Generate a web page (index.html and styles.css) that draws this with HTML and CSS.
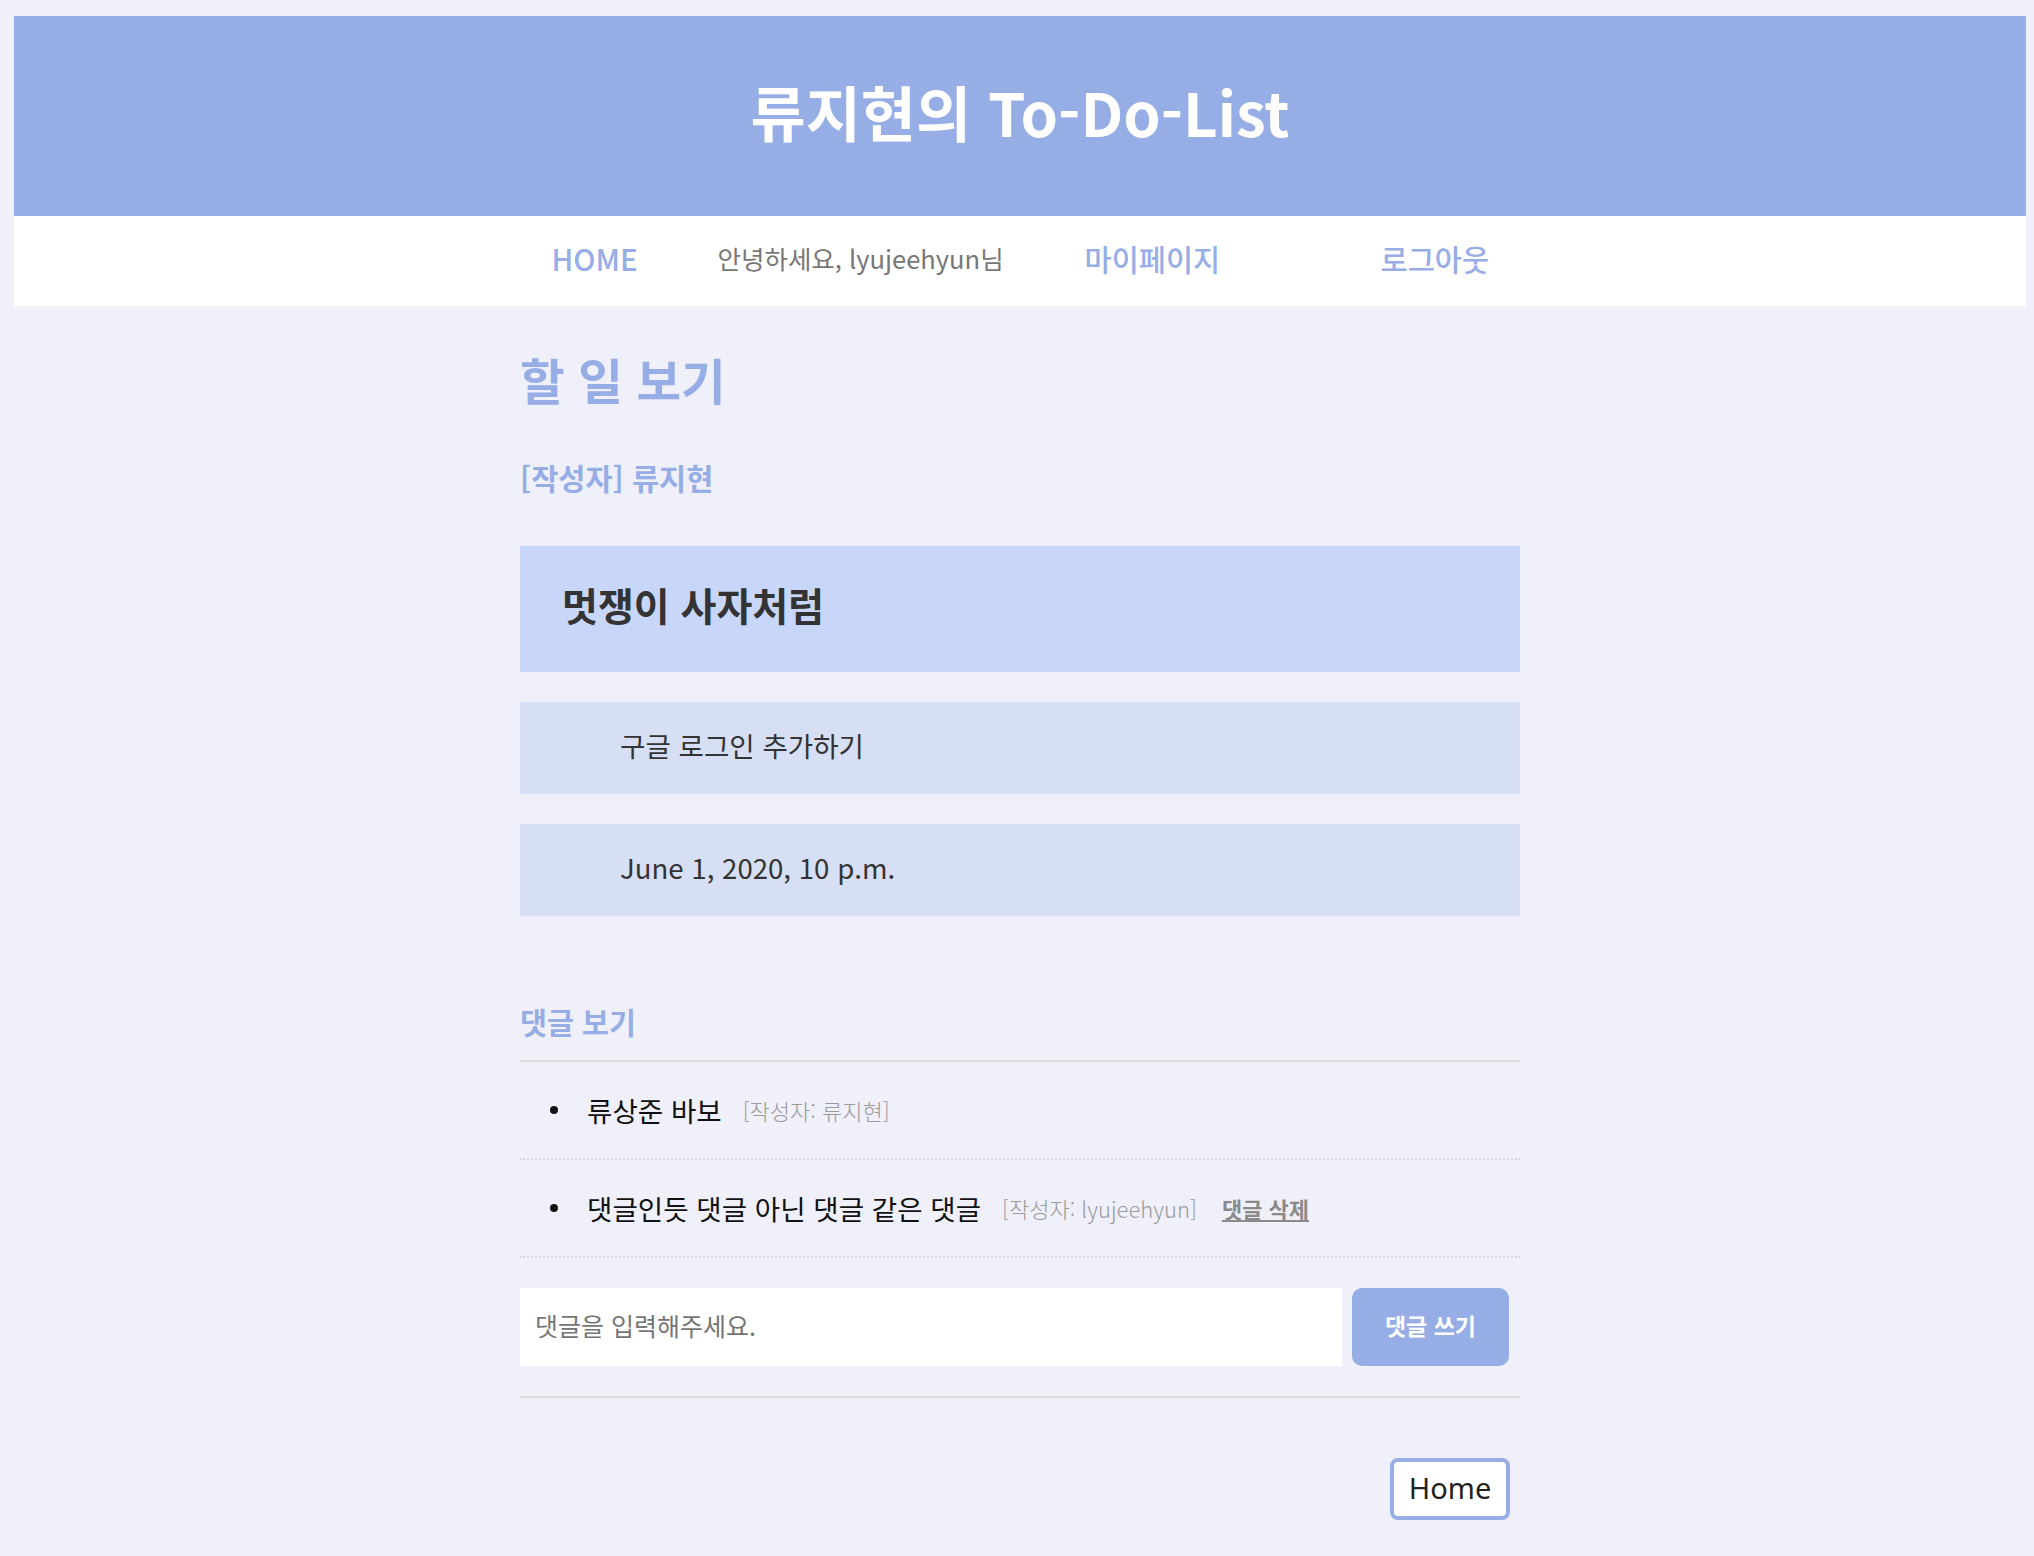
FILE: index.html
```html
<!DOCTYPE html>
<html lang="ko">
<head>
<meta charset="utf-8">
<title>류지현의 To-Do-List</title>
<link rel="stylesheet" href="styles.css">
</head>
<body>
<header class="site-header">
  <h1 class="site-title">류지현의 To-Do-List</h1>
</header>
<nav class="site-nav">
  <a class="nav-item nav-link w1" href="#">HOME</a>
  <span class="nav-item nav-greet w2">안녕하세요, lyujeehyun님</span>
  <a class="nav-item nav-link w3" href="#">마이페이지</a>
  <a class="nav-item nav-link w4" href="#">로그아웃</a>
</nav>
<main class="content">
  <h2 class="page-title">할 일 보기</h2>
  <h3 class="author">[작성자] 류지현</h3>
  <div class="todo-title">멋쟁이 사자처럼</div>
  <div class="todo-field">구글 로그인 추가하기</div>
  <div class="todo-field">June 1, 2020, 10 p.m.</div>

  <h3 class="comments-title">댓글 보기</h3>
  <div class="rule"></div>
  <ul class="comment-list">
    <li class="comment"><span class="bullet"></span><span class="comment-text">류상준 바보</span><span class="comment-meta">[작성자: 류지현]</span></li>
    <li class="comment"><span class="bullet"></span><span class="comment-text">댓글인듯 댓글 아닌 댓글 같은 댓글</span><span class="comment-meta">[작성자: lyujeehyun]</span><a class="comment-delete" href="#">댓글 삭제</a></li>
  </ul>
  <form class="comment-form">
    <input class="comment-input" type="text" placeholder="댓글을 입력해주세요.">
    <button class="comment-submit" type="button">댓글 쓰기</button>
  </form>
  <div class="rule rule-bottom"></div>
  <div class="home-row">
    <button class="home-btn" type="button">Home</button>
  </div>
</main>
</body>
</html>
```
FILE: styles.css
```css
html, body {
  background: #eff0f9;
}
body {
  margin: 16px 8px 0 14px;
  font-family: "Noto Sans CJK KR", "Noto Sans", sans-serif;
  color: #333;
}
.site-header {
  height: 200px;
  background: #96ade6;
  display: flex;
  align-items: center;
  justify-content: center;
}
.site-title {
  margin: 0;
  padding-bottom: 11px;
  font-size: 60px;
  line-height: 60px;
  font-weight: 700;
  color: #ffffff;
}
.site-nav {
  height: 90px;
  background: #ffffff;
  display: flex;
  align-items: center;
  justify-content: center;
  line-height: 28px;
  padding-bottom: 6px;
  box-sizing: border-box;
}
.nav-item {
  display: block;
  white-space: nowrap;
  text-decoration: none;
}
.w1 { width: 166px; }
.w2 { width: 367px; }
.w3 { width: 296px; }
.w4 { width: 108px; }
.nav-link {
  color: #96ade6;
  font-size: 29.5px;
  font-weight: 500;
}
.nav-greet {
  color: #777777;
  font-size: 25.5px;
}
.content {
  width: 1000px;
  margin: 0 auto;
}
.page-title {
  margin: 49px 0 0;
  font-size: 48.5px;
  line-height: 48px;
  font-weight: 700;
  color: #96ade6;
}
.author {
  margin: 60px 0 0;
  font-size: 29.5px;
  line-height: 28px;
  font-weight: 700;
  color: #96ade6;
}
.todo-title {
  margin-top: 55px;
  height: 126px;
  box-sizing: border-box;
  padding: 0 0 10px 42px;
  display: flex;
  align-items: center;
  background: #c8d6fa;
  font-size: 39px;
  line-height: 36px;
  font-weight: 700;
  color: #333;
}
.todo-field {
  margin-top: 30px;
  height: 92px;
  box-sizing: border-box;
  padding: 0 0 7px 100px;
  display: flex;
  align-items: center;
  background: #d6dff3;
  font-size: 27.6px;
  line-height: 28px;
  color: #333;
}
.comments-title {
  margin: 91px 0 0;
  font-size: 29.3px;
  line-height: 28px;
  font-weight: 700;
  color: #96ade6;
}
.rule {
  margin-top: 25px;
  height: 2px;
  background: #dcdcdc;
}
.comment-list {
  list-style: none;
  margin: 0;
  padding: 0;
}
.comment {
  height: 98px;
  box-sizing: border-box;
  border-bottom: 2px dotted #d8d8d8;
  display: flex;
  align-items: center;
  padding-left: 30px;
}
.bullet {
  width: 8px;
  height: 8px;
  border-radius: 50%;
  background: #111;
  margin-right: 29px;
  flex: none;
}
.comment-text {
  font-size: 27.6px;
  line-height: 28px;
  color: #111;
}
.comment-meta {
  margin-left: 21px;
  font-size: 22px;
  line-height: 24px;
  font-weight: 300;
  color: #9a9a9a;
}
.comment-delete {
  margin-left: 25px;
  font-size: 22px;
  line-height: 24px;
  font-weight: 700;
  color: #8a8a8a;
  text-decoration: underline;
}
.comment-form {
  margin: 30px 0 0;
  display: flex;
  height: 78px;
}
.comment-input {
  width: 822px;
  height: 78px;
  box-sizing: border-box;
  border: none;
  outline: none;
  background: #ffffff;
  padding: 0 0 4px 15px;
  font-family: "Noto Sans CJK KR", "Noto Sans", sans-serif;
  font-size: 25px;
  color: #333;
}
.comment-input::placeholder {
  color: #757575;
}
.comment-submit {
  margin-left: 10px;
  width: 157px;
  height: 78px;
  border: none;
  border-radius: 10px;
  background: #96ade6;
  color: #ffffff;
  font-family: "Noto Sans CJK KR", "Noto Sans", sans-serif;
  font-size: 23px;
  font-weight: 700;
  padding: 0 0 4px;
}
.rule-bottom {
  margin-top: 30px;
}
.home-row {
  margin-top: 60px;
  display: flex;
  justify-content: flex-end;
  padding-right: 10px;
}
.home-btn {
  width: 120px;
  height: 62px;
  box-sizing: border-box;
  border: 4px solid #96ade6;
  border-radius: 8px;
  background: #ffffff;
  color: #222;
  font-family: "Noto Sans", sans-serif;
  font-size: 29px;
  padding: 0 0 3px;
}
```
